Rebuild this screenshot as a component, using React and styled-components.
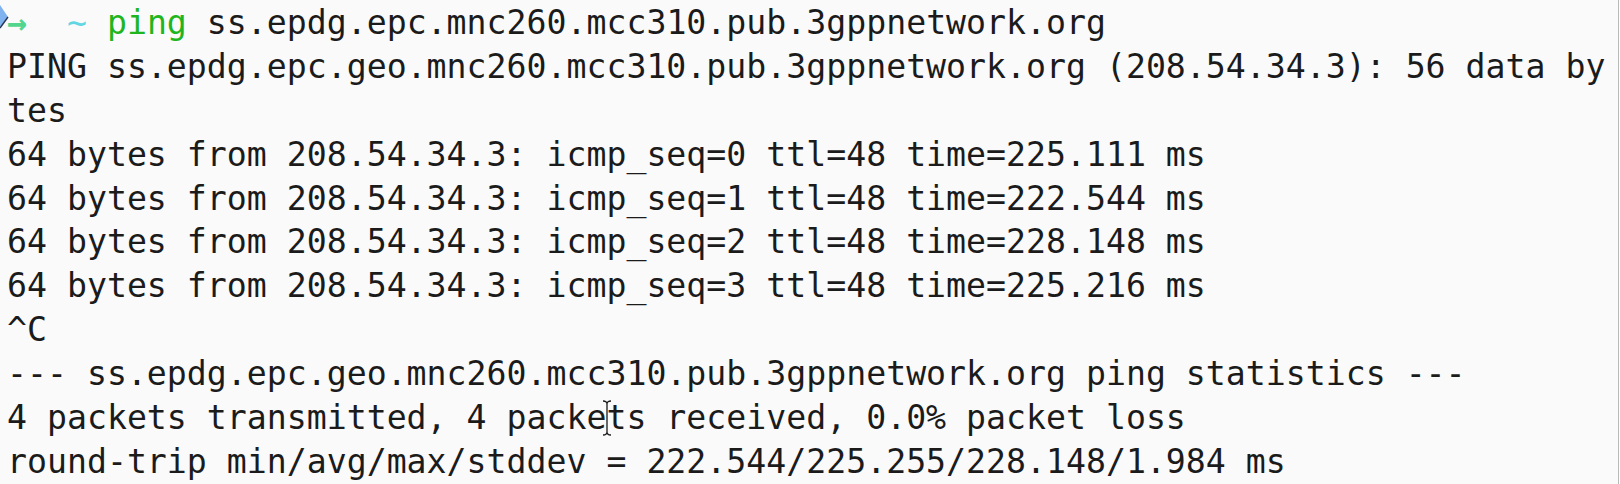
import React from "react";
import styled, { createGlobalStyle } from "styled-components";

const Global = createGlobalStyle`
  html, body {
    margin: 0;
    padding: 0;
    background: #ffffff;
    overflow: hidden;
  }
`;

const Window = styled.div`
  position: relative;
  width: 1618px;
  height: 484px;
  background: #fafafa;
  border-right: 1px solid #b9b9b9;
  overflow: hidden;
`;

const Screen = styled.div`
  display: flex;
  flex-direction: column;
  padding: 1px 0 0 7px;
  font-family: "DejaVu Sans Mono", "Liberation Mono", monospace;
  font-size: 33.2px;
  line-height: 43.9px;
  color: #1b1b1b;
  white-space: pre;
`;

const Line = styled.div`
  height: 43.9px;
`;

const Seg = styled.span`
  color: ${(p) => p.$c || "inherit"};
  font-weight: ${(p) => (p.$bold ? 700 : 400)};
`;

const Mark = styled.svg`
  position: absolute;
  left: 0;
  top: 4px;
  width: 10px;
  height: 32px;
`;

const Cursor = styled.svg`
  position: absolute;
  left: 602px;
  top: 400px;
  width: 10px;
  height: 36px;
`;

const lines = [
  "PING ss.epdg.epc.geo.mnc260.mcc310.pub.3gppnetwork.org (208.54.34.3): 56 data by",
  "tes",
  "64 bytes from 208.54.34.3: icmp_seq=0 ttl=48 time=225.111 ms",
  "64 bytes from 208.54.34.3: icmp_seq=1 ttl=48 time=222.544 ms",
  "64 bytes from 208.54.34.3: icmp_seq=2 ttl=48 time=228.148 ms",
  "64 bytes from 208.54.34.3: icmp_seq=3 ttl=48 time=225.216 ms",
  "^C",
  "--- ss.epdg.epc.geo.mnc260.mcc310.pub.3gppnetwork.org ping statistics ---",
  "4 packets transmitted, 4 packets received, 0.0% packet loss",
  "round-trip min/avg/max/stddev = 222.544/225.255/228.148/1.984 ms",
];

export default function App() {
  return (
    <>
      <Global />
      <Window>
        <Mark viewBox="0 0 10 32">
          <polygon points="0,1 8,13 0,24" fill="#7fb2ee" />
          <line x1="8" y1="13" x2="0" y2="24" stroke="#2a3550" strokeWidth="1.4" />
        </Mark>
        <Screen>
          <Line>
            <Seg $c="#52d58d" $bold>→</Seg>
            {"  "}
            <Seg $c="#63d6e4">~</Seg>
            {" "}
            <Seg $c="#1fb51f">ping</Seg>
            {" ss.epdg.epc.mnc260.mcc310.pub.3gppnetwork.org"}
          </Line>
          {lines.map((t, i) => (
            <Line key={i}>{t}</Line>
          ))}
        </Screen>
        <Cursor viewBox="0 0 10 36">
          <path
            d="M1 1 Q5 1 5 4 Q5 1 9 1 M5 4 V32 M1 35 Q5 35 5 32 Q5 35 9 35"
            fill="none"
            stroke="#1b1b1b"
            strokeWidth="1.3"
          />
        </Cursor>
      </Window>
    </>
  );
}
